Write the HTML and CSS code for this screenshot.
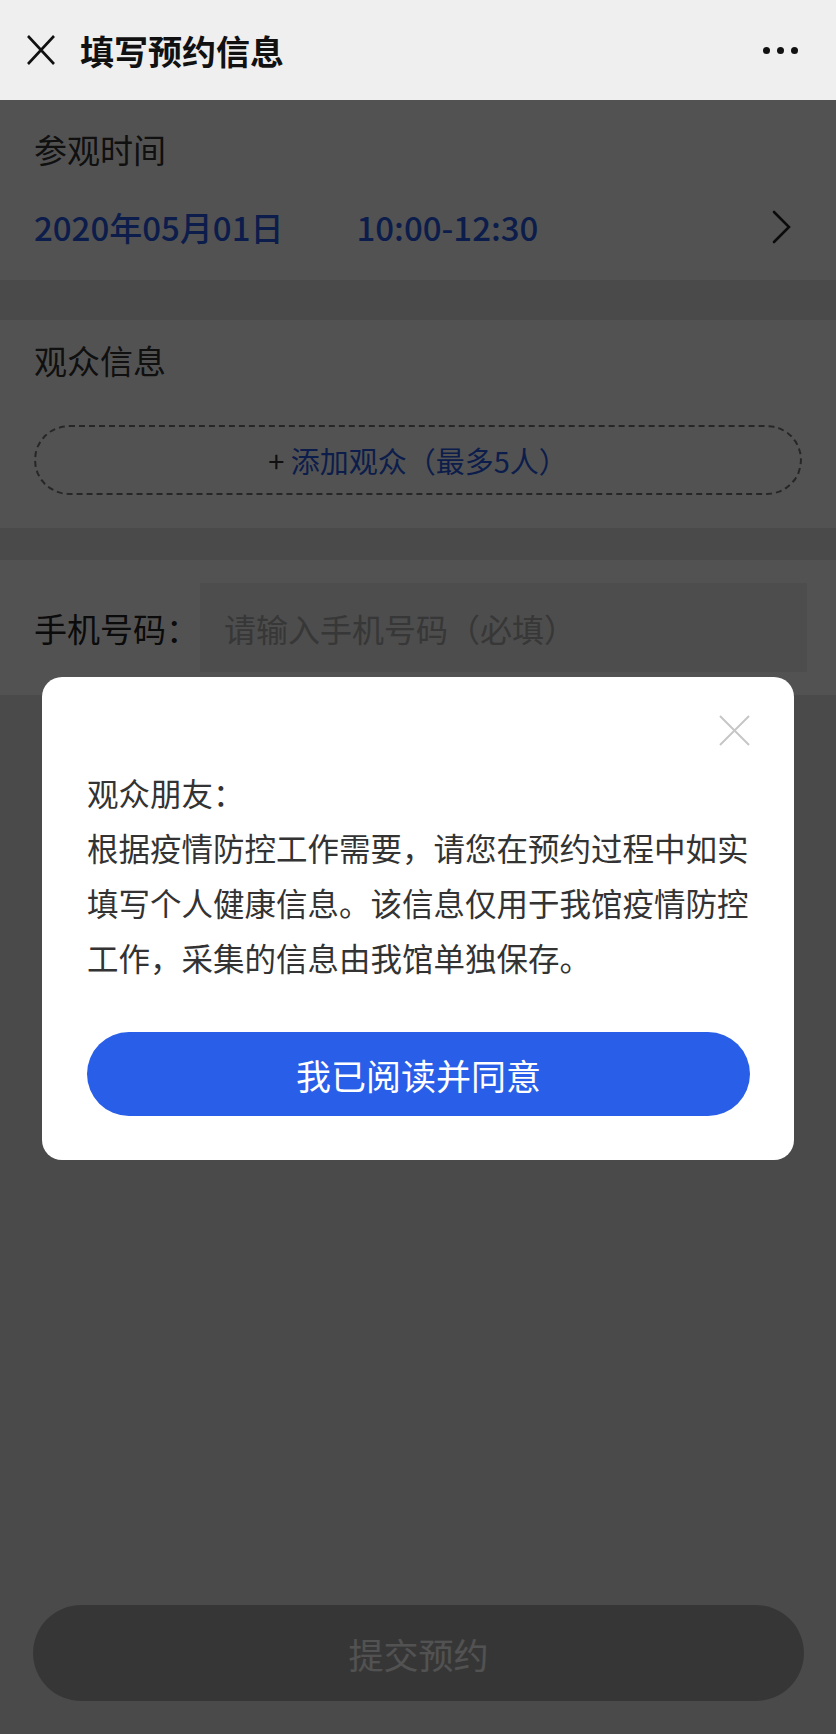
FILE: index.html
```html
<!DOCTYPE html>
<html lang="zh-CN">
<head>
    <meta charset="UTF-8">
    <meta name="viewport" content="width=device-width, initial-scale=1.0">
    <title>填写预约信息</title>
    <link rel="stylesheet" href="styles.css">
</head>
<body>
    <header class="topbar">
        <svg class="topbar-close" width="28" height="30" viewBox="0 0 28 30">
            <path d="M1 1 L27 29 M27 1 L1 29" stroke="#111" stroke-width="2.6" fill="none"/>
        </svg>
        <h1 class="topbar-title">填写预约信息</h1>
        <div class="topbar-more">
            <span></span><span></span><span></span>
        </div>
    </header>

    <section class="block block-time">
        <h2 class="block-label">参观时间</h2>
        <div class="time-row">
            <span class="time-date">2020年05月01日</span>
            <span class="time-range">10:00-12:30</span>
            <svg class="time-arrow" width="20" height="34" viewBox="0 0 20 34">
                <path d="M2 2 L17 17 L2 32" stroke="#222" stroke-width="2.6" fill="none" stroke-linecap="round"/>
            </svg>
        </div>
    </section>

    <section class="block block-visitors">
        <h2 class="block-label">观众信息</h2>
        <button class="add-visitor"><span class="add-plus">+</span> 添加观众（最多5人）</button>
    </section>

    <section class="block block-phone">
        <label class="phone-label" for="phone">手机号码：</label>
        <input class="phone-input" id="phone" type="tel" placeholder="请输入手机号码（必填）">
    </section>

    <footer class="footer">
        <button class="submit-btn">提交预约</button>
    </footer>

    <div class="mask">
        <div class="dialog">
            <div class="dialog-head">
                <svg class="dialog-close" width="32" height="32" viewBox="0 0 32 32">
                    <path d="M1 1 L31 31 M31 1 L1 31" stroke="#c6c6c6" stroke-width="2" fill="none"/>
                </svg>
            </div>
            <p class="dialog-text">观众朋友：<br>根据疫情防控工作需要，请您在预约过程中如实填写个人健康信息。该信息仅用于我馆疫情防控工作，采集的信息由我馆单独保存。</p>
            <button class="dialog-btn">我已阅读并同意</button>
        </div>
    </div>
</body>
</html>
```

FILE: styles.css
```css
body {
    font-family: "Noto Sans CJK SC", "Noto Sans", sans-serif;
    margin: 0;
    padding: 0;
    background-color: #e7e7e7;
    color: #333;
    min-height: 100vh;
    display: flex;
    flex-direction: column;
}
button {
    font-family: inherit;
    border: none;
    cursor: pointer;
}

/* top bar */
.topbar {
    height: 100px;
    background-color: #efefef;
    display: flex;
    align-items: center;
    padding: 0 38px 0 27px;
}
.topbar-close {
    flex-shrink: 0;
}
.topbar-title {
    margin: 0 0 0 25px;
    font-size: 34px;
    font-weight: bold;
    color: #111;
    flex: 1;
}
.topbar-more {
    display: flex;
    gap: 7px;
}
.topbar-more span {
    width: 7px;
    height: 7px;
    border-radius: 50%;
    background-color: #111;
}

/* sections */
.block {
    background-color: #fff;
    padding: 0 34px;
}
.block-label {
    margin: 0;
    font-size: 33px;
    font-weight: normal;
    line-height: 44px;
    color: #333;
}
.block-time {
    padding-top: 27px;
    padding-bottom: 31px;
    margin-bottom: 40px;
}
.time-row {
    margin-top: 34px;
    display: flex;
    align-items: center;
    height: 44px;
    font-size: 33px;
    font-weight: 500;
    color: #2a5ce8;
}
.time-range {
    margin-left: 73px;
    flex: 1;
}
.time-arrow {
    margin-right: 10px;
}

.block-visitors {
    padding-top: 18px;
    padding-bottom: 33px;
    margin-bottom: 32px;
}
.add-visitor {
    display: block;
    width: 100%;
    height: 70px;
    margin-top: 43px;
    border: 2px dashed #777;
    border-radius: 35px;
    background: none;
    font-size: 29px;
    color: #2a5ce8;
}
.add-plus {
    color: #333;
}

.block-phone {
    display: flex;
    align-items: center;
    padding: 23px 29px 23px 34px;
}
.phone-label {
    font-size: 33px;
    color: #222;
    width: 166px;
    white-space: nowrap;
}
.phone-input {
    flex: 1;
    height: 89px;
    border: none;
    outline: none;
    background-color: #eeeeee;
    padding: 0 24px;
    font-family: inherit;
    font-size: 32px;
}
.phone-input::placeholder {
    color: #aaa;
}

/* bottom */
.footer {
    margin-top: auto;
    padding: 0 32px 33px 33px;
}
.submit-btn {
    display: block;
    width: 100%;
    height: 96px;
    border-radius: 48px;
    background-color: #a9a9a9;
    color: #fff;
    font-size: 35px;
}

/* popup */
.mask {
    position: fixed;
    top: 100px;
    left: 0;
    right: 0;
    bottom: 0;
    background-color: rgba(0, 0, 0, 0.68);
    display: flex;
    flex-direction: column;
    align-items: center;
    padding-top: 577px;
}
.dialog {
    width: 752px;
    box-sizing: border-box;
    background-color: #fff;
    border-radius: 20px;
    padding: 38px 44px 44px 45px;
}
.dialog-head {
    display: flex;
    justify-content: flex-end;
    height: 30px;
}
.dialog-close {
    width: 31px;
    height: 31px;
}
.dialog-text {
    margin: 20px 0 0;
    font-size: 31.5px;
    line-height: 55px;
    color: #333;
}
.dialog-btn {
    display: block;
    width: 100%;
    height: 84px;
    margin-top: 47px;
    border-radius: 42px;
    background-color: #285ee8;
    color: #fff;
    font-size: 35px;
}
```
